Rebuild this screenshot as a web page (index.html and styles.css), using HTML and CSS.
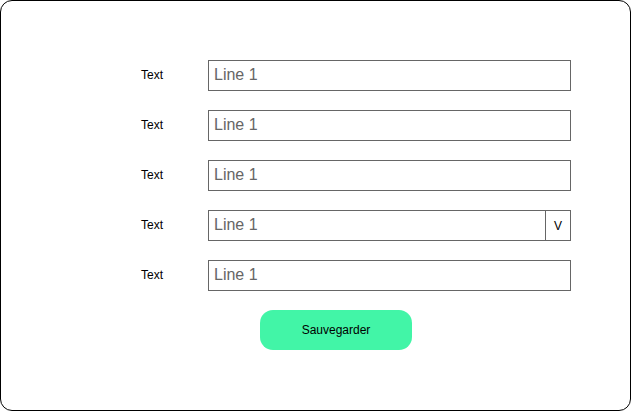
FILE: index.html
```html
<!DOCTYPE html>
<html>
<head>
<meta charset="utf-8">
<link rel="stylesheet" href="styles.css">
</head>
<body>
<div class="frame">
  <div class="form">
    <div class="row"><span class="label">Text</span><div class="field"><span class="ph">Line 1</span></div></div>
    <div class="row"><span class="label">Text</span><div class="field"><span class="ph">Line 1</span></div></div>
    <div class="row"><span class="label">Text</span><div class="field"><span class="ph">Line 1</span></div></div>
    <div class="row"><span class="label">Text</span><div class="field select"><span class="ph">Line 1</span><span class="arrow">V</span></div></div>
    <div class="row"><span class="label">Text</span><div class="field"><span class="ph">Line 1</span></div></div>
  </div>
  <button class="save">Sauvegarder</button>
</div>
</body>
</html>
```
FILE: styles.css
```css
html, body { margin: 0; padding: 0; background: #fff; }
body { font-family: "Liberation Sans", Arial, sans-serif; }
.frame {
  width: 631px; height: 411px; box-sizing: border-box;
  border: 1px solid #000; border-radius: 12px;
  padding-top: 59px; padding-left: 111px;
}
.form { display: flex; flex-direction: column; gap: 19px; }
.row { display: flex; align-items: center; height: 31px; }
.label { width: 80px; margin-right: 16px; text-align: center; font-size: 12px; color: #000; line-height: 14px; margin-top: -1px; }
.field {
  width: 363px; height: 31px; box-sizing: border-box;
  border: 1px solid #666; display: flex; align-items: center;
}
.ph { padding-left: 5px; font-size: 16px; color: #666; flex: 1; line-height: 18px; margin-top: -1px; }
.arrow {
  width: 24px; height: 100%; border-left: 1px solid #666;
  display: flex; align-items: center; justify-content: center;
  font-size: 12px; color: #000;
}
.save {
  display: block; margin: 19px 0 0 148px;
  width: 152px; height: 40px; border: none; border-radius: 13px;
  background: #42f5a7; font-family: "Liberation Sans", Arial, sans-serif;
  font-size: 12px; color: #000; padding: 0;
}
```
